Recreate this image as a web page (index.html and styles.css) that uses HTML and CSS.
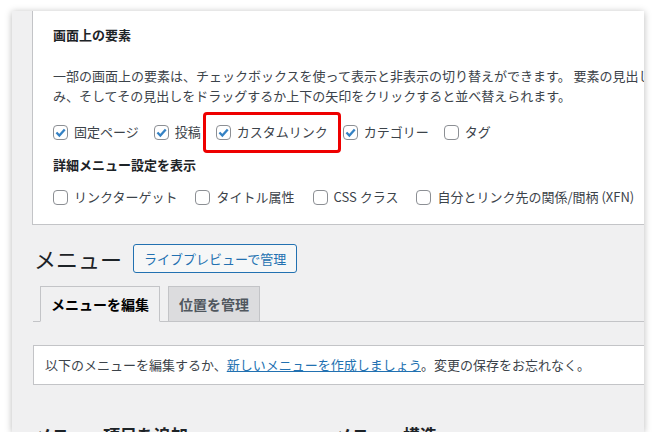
FILE: index.html
```html
<!DOCTYPE html>
<html lang="ja">
<head>
<meta charset="utf-8">
<link rel="stylesheet" href="styles.css">
</head>
<body>
<div class="window">
  <div class="screen-options">
    <h5 class="so-title">画面上の要素</h5>
    <p class="so-desc">一部の画面上の要素は、チェックボックスを使って表示と非表示の切り替えができます。 要素の見出しをクリックすると展開・折りたた<br>み、そしてその見出しをドラッグするか上下の矢印をクリックすると並べ替えられます。</p>
    <div class="cb-row">
      <label class="cb-item"><span class="cb checked"><svg viewBox="0 0 16 16"><path d="M3 8 L6.6 11.8 L13.2 4.2"/></svg></span>固定ページ</label>
      <label class="cb-item"><span class="cb checked"><svg viewBox="0 0 16 16"><path d="M3 8 L6.6 11.8 L13.2 4.2"/></svg></span>投稿</label>
      <label class="cb-item highlight"><span class="cb checked"><svg viewBox="0 0 16 16"><path d="M3 8 L6.6 11.8 L13.2 4.2"/></svg></span>カスタムリンク</label>
      <label class="cb-item"><span class="cb checked"><svg viewBox="0 0 16 16"><path d="M3 8 L6.6 11.8 L13.2 4.2"/></svg></span>カテゴリー</label>
      <label class="cb-item"><span class="cb"></span>タグ</label>
    </div>
    <h5 class="so-sub">詳細メニュー設定を表示</h5>
    <div class="cb-row wide">
      <label class="cb-item"><span class="cb"></span>リンクターゲット</label>
      <label class="cb-item"><span class="cb"></span>タイトル属性</label>
      <label class="cb-item"><span class="cb"></span>CSS クラス</label>
      <label class="cb-item"><span class="cb"></span>自分とリンク先の関係/間柄 (XFN)</label>
    </div>
  </div>

  <div class="title-row">
    <h1 class="page-title">メニュー</h1>
    <a class="btn-outline">ライブプレビューで管理</a>
  </div>

  <nav class="tabs">
    <a class="tab active">メニューを編集</a>
    <a class="tab">位置を管理</a>
  </nav>

  <div class="notice">以下のメニューを編集するか、<a class="link">新しいメニューを作成しましょう</a>。変更の保存をお忘れなく。</div>

  <div class="columns">
    <h2 class="col-title col-left">メニュー項目を追加</h2>
    <h2 class="col-title">メニュー構造</h2>
  </div>
</div>
</body>
</html>
```

FILE: styles.css
```css
* { box-sizing: border-box; }
html, body { margin: 0; padding: 0; background: #ffffff; }
body {
  font-family: "Noto Sans CJK JP", "Noto Sans", sans-serif;
  font-size: 13px;
  color: #3c434a;
}
.window {
  margin: 11px 0 0 12px;
  width: 632px;
  height: 421px;
  background: #f0f0f1;
  overflow: hidden;
  box-shadow: 0 1px 7px rgba(0, 0, 0, 0.28);
}
.screen-options {
  margin-left: 20px;
  margin-right: -30px;
  background: #ffffff;
  border-left: 1px solid #c3c4c7;
  border-bottom: 1px solid #c3c4c7;
  padding: 14px 20px 15px 20px;
}
.so-title, .so-sub {
  margin: 0;
  font-size: 13px;
  line-height: 20px;
  font-weight: 700;
  color: #1d2327;
}
.so-desc {
  margin: 21px 0 0 0;
  line-height: 20px;
  white-space: nowrap;
}
.cb-row {
  display: flex;
  align-items: center;
  height: 24px;
  margin-top: 14px;
}
.so-sub { margin-top: 11px; }
.cb-row.wide { margin-top: 10px; }
.cb-item {
  position: relative;
  display: flex;
  align-items: center;
  gap: 6px;
  margin-right: 15px;
  line-height: 20px;
  white-space: nowrap;
}
.cb-row.wide .cb-item { margin-right: 18px; }
.cb {
  width: 15px;
  height: 15px;
  border: 1px solid #8c8f94;
  border-radius: 4px;
  background: #fff;
  display: flex;
  align-items: center;
  justify-content: center;
}
.cb svg { width: 13px; height: 13px; }
.cb svg path {
  fill: none;
  stroke: #3582c4;
  stroke-width: 2.8;
  stroke-linecap: butt;
  stroke-linejoin: miter;
}
.highlight::after {
  content: "";
  position: absolute;
  left: -13px;
  right: -13px;
  top: -10px;
  bottom: -11px;
  border: 3px solid #ee0000;
  border-radius: 4px;
}
.title-row {
  display: flex;
  align-items: center;
  margin: 19px 0 0 22px;
  height: 29px;
}
.page-title {
  margin: 0 11px 0 0;
  font-size: 22px;
  font-weight: 400;
  line-height: 29px;
  color: #1d2327;
}
.btn-outline {
  display: block;
  height: 29px;
  padding: 0 10px;
  border: 1px solid #2271b1;
  border-radius: 3px;
  background: #f6f7f7;
  color: #2271b1;
  font-size: 13px;
  line-height: 27px;
  white-space: nowrap;
}
.tabs {
  display: flex;
  margin: 13px -10px 0 21px;
  padding-left: 7px;
  border-bottom: 1px solid #c3c4c7;
  height: 36px;
}
.tab {
  display: block;
  height: 36px;
  padding: 6px 10px;
  border: 1px solid #c3c4c7;
  background: #dcdcde;
  color: #50575e;
  font-size: 14px;
  font-weight: 700;
  line-height: 22px;
  margin-right: 8px;
  white-space: nowrap;
}
.tab.active {
  background: #f0f0f1;
  border-bottom-color: #f0f0f1;
  color: #000000;
}
.notice {
  margin: 23px -10px 0 21px;
  height: 40px;
  background: #ffffff;
  border: 1px solid #c3c4c7;
  padding: 9px 11px;
  line-height: 20px;
  white-space: nowrap;
}
.link {
  color: #2271b1;
  text-decoration: underline;
}
.columns {
  display: flex;
  margin: 39px 0 0 23px;
}
.col-title {
  margin: 0;
  font-size: 17px;
  line-height: 22px;
  font-weight: 700;
  color: #1d2327;
  white-space: nowrap;
}
.col-left { width: 300px; }
```
